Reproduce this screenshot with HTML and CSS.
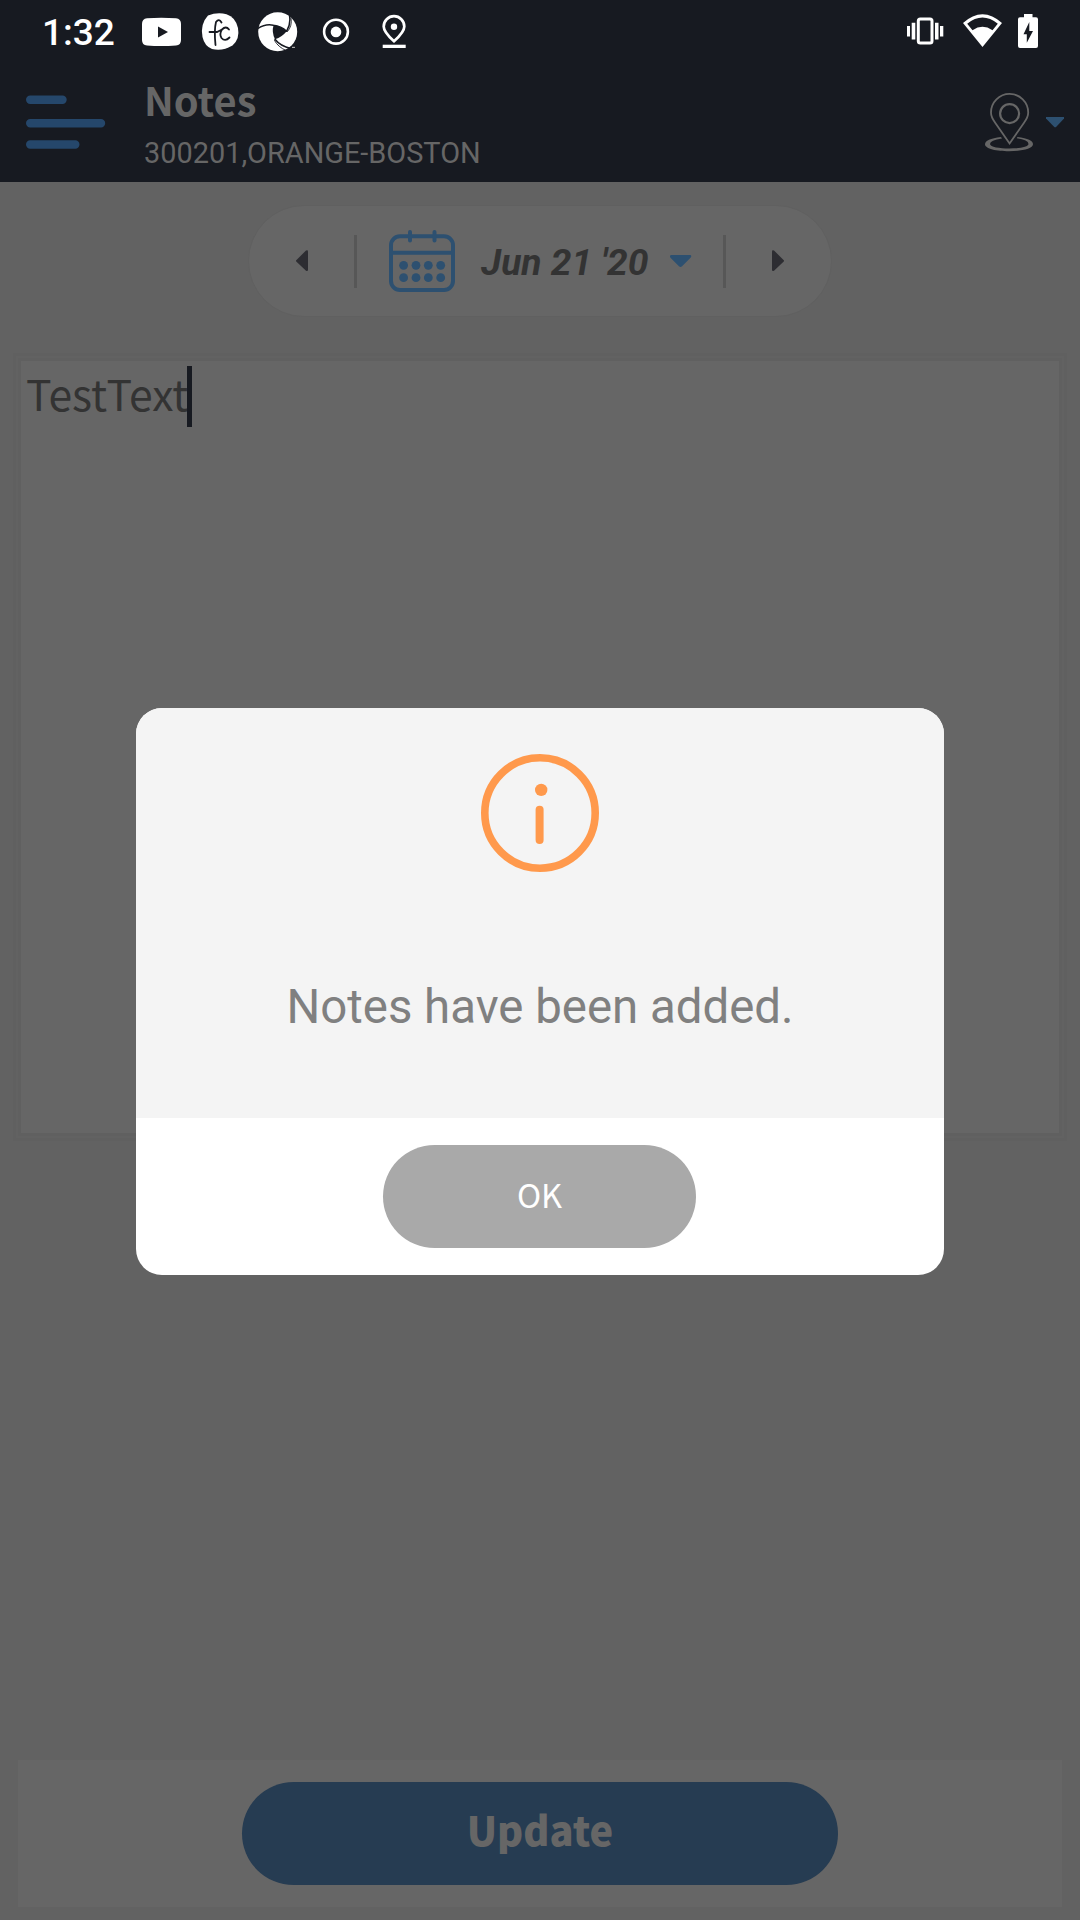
FILE: index.html
```
<!DOCTYPE html>
<html lang="en">
<head>
<meta charset="utf-8">
<title>Notes</title>
<link rel="stylesheet" href="styles.css">
</head>
<body>
<div class="screen">
  <div class="status-bar">
    <span class="clock">1:32</span>
    <div class="status-icons">
      <svg width="40" height="52" viewBox="142 6 40 52"><path fill="#fff" d="M147 18.300Q161 17 176 18.300Q181 19 181 24V40Q181 45 176 45.500Q161 46.600 147 45.500Q142 45 142 40V24Q142 19 147 18.300Z"/><path class="bar-fill" d="M158 26.500V37.500L168 32Z"/></svg>
      <svg width="40" height="52" viewBox="200 6 40 52"><path fill="#fff" d="M208 15.500Q217 12 226.500 14.200Q235.500 17 238 28Q240 39 232.500 45.500Q222.500 51.500 212 49Q204.500 46 202.500 37Q200 24 208 15.500Z"/><path class="bar-line" stroke-width="1.800" d="M221.500 22.500Q219 18 216 22Q214 30 215.500 45M209.500 32H217L221 30M229 29.500Q226 25.500 222 29.500Q219 34 221.500 38Q225 42 229.500 37.500"/></svg>
      <svg width="40" height="52" viewBox="258 6 40 52"><circle cx="277.700" cy="31.700" r="19.500" fill="#fff"/><path class="bar-fill" d="M273.500 25.200Q280 25.500 286.700 31.200Q282 37 275 39.300Q271.500 32 273.500 25.200Z"/><path class="bar-line" stroke-width="1.500" d="M258 28.500Q265 23.500 273.500 25.200Q281 26 286.700 31.200M289.500 15.500Q291 24 286.700 31.200M275 39.300Q280 46 291 48.500"/><path class="bar-line" stroke-width="0.900" d="M291 18Q292.500 26 287.500 31.500M274.500 40.500Q278 47 286 50.500"/><path fill="#aaa" d="M292 46.800H295V48H292Z"/></svg>
      <svg width="28" height="52" viewBox="322 6 28 52"><circle cx="336" cy="31.700" r="11.900" fill="none" stroke="#fff" stroke-width="2.600"/><circle cx="336" cy="31.900" r="5.300" fill="#fff"/></svg>
      <svg width="26" height="52" viewBox="381 6 26 52"><path fill="none" stroke="#fff" stroke-width="2.700" d="M394 41.300Q383.700 32 383.700 26.500A10.300 10.300 0 0 1 404.300 26.500Q404.300 32 394 41.300Z"/><circle cx="394" cy="26.800" r="3.200" fill="#fff"/><path fill="#fff" d="M382.700 44.700H405.700V48H382.700Z"/></svg>
    </div>
    <div class="system-icons">
      <svg width="38" height="52" viewBox="906 6 38 52"><rect x="918.300" y="19" width="13.700" height="24" rx="2" fill="none" stroke="#fff" stroke-width="3"/><path fill="#fff" d="M907 26H910V36.500H907ZM911.700 22.700H915.300V39.500H911.700ZM935 22.700H938.500V39.500H935ZM940 26H943.300V36.500H940Z"/></svg>
      <svg width="40" height="52" viewBox="963 6 40 52"><path fill="#fff" fill-rule="evenodd" d="M963 23Q982.500 5.500 1002 23L982.500 47ZM967.200 23.700L972.500 30.200Q982.500 23.500 992.500 30.200L997.800 23.700Q982.500 11.500 967.200 23.700Z"/></svg>
      <svg width="20" height="52" viewBox="1018 6 20 52"><path fill="#fff" d="M1024 14H1032.500V17.300H1036Q1038 17.300 1038 19.300V46Q1038 48 1036 48H1020Q1018 48 1018 46V19.300Q1018 17.300 1020 17.300H1024Z"/><path class="bar-fill" d="M1029.300 22L1023.500 34.300H1026.800V42.800L1033 31H1029.300Z"/></svg>
    </div>
  </div>

  <header class="app-bar">
    <svg class="menu-icon" width="80" height="56" viewBox="26 94 80 56"><path fill="none" stroke="#25476b" stroke-width="8.400" stroke-linecap="round" d="M30.200 99.700H62.500M30.200 123.200H101M30.200 144.500H75.300"/></svg>
    <div class="heading">
      <h1 class="title">Notes</h1>
      <p class="subtitle">300201,ORANGE-BOSTON</p>
    </div>
    <svg class="location-icon" width="50" height="60" viewBox="984 92 50 60"><g fill="none" stroke="#666" stroke-width="1.800"><path d="M1009.600 143.500L995 122.500Q991 117 991 112.500A18.600 18.600 0 0 1 1028.200 112.500Q1028.200 117 1024.200 122.500Z"/><circle cx="1009.600" cy="113.600" r="9.500" stroke-width="2.200"/></g><path fill="#666" fill-rule="evenodd" d="M1001 137Q985 139 985 144.200C985 153.500 1033 153.500 1033 144.200Q1033 139 1017.500 137L1016.800 138.300Q1028.500 140 1028.500 144C1028.500 150 990 150 990 144Q990 140 1002 138.500Z"/></svg>
    <svg class="location-caret" width="18" height="12" viewBox="1046 116 18 12"><path class="blue-fill" d="M1046 117H1064V118.500L1055.800 127.300H1054.500L1046 118.500Z"/></svg>
  </header>

  <main class="content">
    <div class="date-picker">
      <svg class="previous" width="14" height="24" viewBox="295 249 14 24"><path class="arrow" d="M296 260.500L306 250.500Q308 249.500 308 251.500V269.500Q308 271.800 306 270.700L296 261.200Z"/></svg>
      <span class="divider"></span>
      <svg class="calendar" width="68" height="64" viewBox="388 229 68 64"><g fill="none" stroke="#2d5070" stroke-width="4"><rect x="391" y="236.300" width="62" height="53.700" rx="9"/><path d="M391 252.800H453"/><path stroke-linecap="round" d="M410 232V240.500M434.500 232V240.500"/></g><g class="blue-fill"><circle cx="403.600" cy="265.300" r="4.400"/><circle cx="416" cy="265.300" r="4.400"/><circle cx="428.300" cy="265.300" r="4.400"/><circle cx="440.700" cy="265.300" r="4.400"/><circle cx="403.600" cy="277.700" r="4.400"/><circle cx="416" cy="277.700" r="4.400"/><circle cx="428.300" cy="277.700" r="4.400"/><circle cx="440.700" cy="277.700" r="4.400"/></g></svg>
      <span class="date">Jun 21 '20</span>
      <svg class="date-caret" width="22" height="14" viewBox="670 254 22 14"><path class="blue-fill" d="M671 255H690.500Q692 256 690.500 257.700L682 266.300Q680.500 267.900 679 266.300L670.500 257.700Q669 256 671 255Z"/></svg>
      <span class="divider"></span>
      <svg class="next" width="14" height="24" viewBox="771 249 14 24"><path class="arrow" d="M784 260.500L774 250.500Q772 249.500 772 251.500V269.500Q772 271.800 774 270.700L784 261.200Z"/></svg>
    </div>
    <div class="note-frame"><div class="note-field"><span class="note-text">TestText</span><span class="cursor"></span></div></div>
  </main>

  <footer class="footer"><button class="update">Update</button></footer>

  <div class="overlay">
    <section class="dialog" role="dialog">
      <div class="dialog-body">
        <svg width="118" height="118" viewBox="481 754 118 118"><g fill="none" stroke="#ff994c"><circle cx="540" cy="813" r="55.200" stroke-width="7.600"/><path stroke-width="8" stroke-linecap="round" d="M539.600 809.800V840"/></g><circle cx="541.200" cy="789.900" r="6.200" fill="#ff994c"/></svg>
        <p class="message">Notes have been added.</p>
      </div>
      <div class="dialog-actions"><button class="ok">OK</button></div>
    </section>
  </div>
</div>
</body>
</html>
```
FILE: styles.css
```
* { box-sizing: border-box; }
body { margin: 0; background: #626262; font-family: Roboto, sans-serif; }
h1, p { margin: 0; }
svg { display: block; flex: none; }
button { border: 0; padding: 0; display: flex; align-items: center; justify-content: center; }

.screen { position: relative; display: flex; flex-direction: column; width: 1080px; height: 1920px; overflow: hidden; background: #626262; }

.status-bar { display: flex; align-items: center; height: 64px; padding: 0 42px; background: #171a21; color: #fff; }
.clock { width: 100px; padding-top: 2px; font-size: 37px; font-weight: 500; line-height: 50px; white-space: nowrap; }
.status-icons { display: grid; grid-template-columns: 58px 58px 64px 59px 26px; }
.system-icons { display: grid; grid-template-columns: 57px 55px 20px; margin-left: auto; }
.bar-fill { fill: #171a21; }
.bar-line { fill: none; stroke: #171a21; stroke-linecap: round; }
.blue-fill { fill: #2d5070; }

.app-bar { display: flex; height: 118px; padding: 0 16px 0 26px; background: #171a21; color: #666; }
.menu-icon { margin-top: 30px; }
.heading { flex: 1; padding-left: 38px; }
.title { margin-top: 6px; height: 60px; font: 700 39.800px/58px "Noto Sans CJK SC", sans-serif; }
.subtitle { margin-top: 5px; font-size: 28.900px; line-height: 36px; }
.location-icon { margin-top: 28px; }
.location-caret { margin: 52px 0 0 12px; }

.content { flex: 1; padding: 23px 13px 0; }
.date-picker { display: flex; align-items: center; width: 584px; height: 112px; margin: 0 auto; padding-left: 46px; border: 1px solid #606060; border-radius: 56px; background: #666; }
.divider { width: 3px; height: 53px; background: #575757; }
.previous { margin-right: 45px; }
.calendar { margin-left: 31px; }
.date { width: 189px; margin-left: 25px; padding-top: 2px; color: #333; font-size: 37.200px; font-style: italic; font-weight: 700; white-space: nowrap; }
.date-caret { margin-right: 31px; }
.next { margin-left: 45px; }
.arrow { fill: #2d2d32; }

.note-frame { width: 1054px; height: 788px; margin-top: 36px; padding: 2px; border: 3px solid #606060; background: #626262; }
.note-field { display: flex; height: 778px; padding: 5px 5px; border: 3px solid #606060; background: #666; }
.note-text { width: 161px; margin-top: -4px; color: #333; font: 400 42.700px/61px "Noto Sans CJK SC", sans-serif; }
.cursor { width: 5px; height: 61px; background: #171a21; }

.footer { display: flex; justify-content: center; align-items: center; height: 147px; margin: 0 18px 13px; background: #666; }
.update { width: 596px; height: 103px; padding-bottom: 9px; border-radius: 52px; background: #263c52; color: #666; font: 900 39.800px/58px "Noto Sans CJK SC", sans-serif; }

.overlay { position: absolute; inset: 0; display: flex; justify-content: center; padding-top: 708px; }
.dialog { width: 808px; height: 567px; border-radius: 26px; overflow: hidden; background: #fff; }
.dialog-body { display: flex; flex-direction: column; align-items: center; height: 410px; padding-top: 46px; background: #f4f4f4; }
.message { margin-top: 107px; color: #808080; font-size: 47.400px; line-height: 56px; white-space: nowrap; }
.dialog-actions { display: flex; justify-content: center; padding: 27px 1px 0 0; }
.ok { width: 313px; height: 103px; padding-bottom: 5px; border-radius: 52px; background: #a9a9a9; color: #fff; font: 400 32.600px/48px "Noto Sans CJK SC", sans-serif; }
```
